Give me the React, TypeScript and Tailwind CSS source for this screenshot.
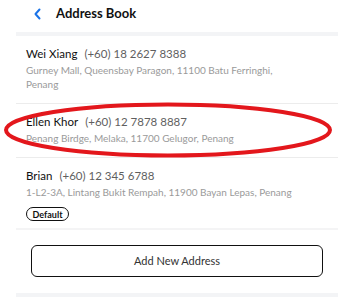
import React from "react";

const rows = [
  {
    name: "Wei Xiang",
    phone: "(+60) 18 2627 8388",
    address: "Gurney Mall, Queensbay Paragon, 11100 Batu Ferringhi, Penang",
  },
  {
    name: "Ellen Khor",
    phone: "(+60) 12 7878 8887",
    address: "Penang Birdge, Melaka, 11700 Gelugor, Penang",
  },
  {
    name: "Brian",
    phone: "(+60) 12 345 6788",
    address: "1-L2-3A, Lintang Bukit Rempah, 11900 Bayan Lepas, Penang",
    isDefault: true,
  },
];

export default function App() {
  return (
    <div
      className="relative w-[348px] h-[301px] bg-white overflow-hidden"
      style={{ fontFamily: "Lato, 'Noto Sans', sans-serif" }}
    >
      <div className="flex items-center h-[26px] mb-[6px] pl-[33px]">
        <svg width="9" height="12" viewBox="0 0 9 12" className="mt-[1px]">
          <path d="M6.5 1.5 L2.5 6 L6.5 10.5" fill="none" stroke="#1a73e8" strokeWidth="2" strokeLinecap="round" strokeLinejoin="round" />
        </svg>
        <span className="ml-[14px] text-[13px] font-bold text-[#111] leading-none">Address Book</span>
      </div>
      <div className="ml-[16px] w-[322px]">
        <div className="h-[4px] bg-[#f3f4f6]" />
        {rows.map((r, i) => (
          <div key={i}>
            <div className={`pl-[10px] pt-[9px] ${r.isDefault ? "pb-[7px]" : "pb-[12px]"}`}>
              <div className="flex items-center h-[17px] leading-[17px]">
                <span className="text-[11.5px] text-[#111]">{r.name}</span>
                <span className="ml-[7px] text-[11.5px] text-[#5f5f5f]">{r.phone}</span>
              </div>
              <div className="mt-[1px] w-[266px] text-[10px] leading-[14px] text-[#9a9a9a]">{r.address}</div>
              {r.isDefault && (
                <div className="mt-[8px] flex">
                  <span className="h-[14px] w-[43px] flex items-center justify-center rounded-full border-[1.5px] border-[#111] text-[9px] font-bold text-[#111] leading-none">
                    Default
                  </span>
                </div>
              )}
            </div>
            <div className={r.isDefault ? "h-[2px] bg-[#f4f4f5]" : "h-[1px] bg-[#ececec]"} />
          </div>
        ))}
        <div className="pt-[15px] pb-[16px] flex justify-center">
          <button className="w-[292px] h-[32px] rounded-[6px] border-[1.5px] border-[#111] bg-white text-[11px] text-[#333] flex items-center justify-center">
            Add New Address
          </button>
        </div>
        <div className="h-[4px] bg-[#f3f4f6]" />
      </div>
      <svg className="absolute left-0 top-0 pointer-events-none" width="348" height="301">
        <ellipse cx="168" cy="130" rx="162" ry="25.5" fill="none" stroke="#e3171c" strokeWidth="4" />
      </svg>
    </div>
  );
}
